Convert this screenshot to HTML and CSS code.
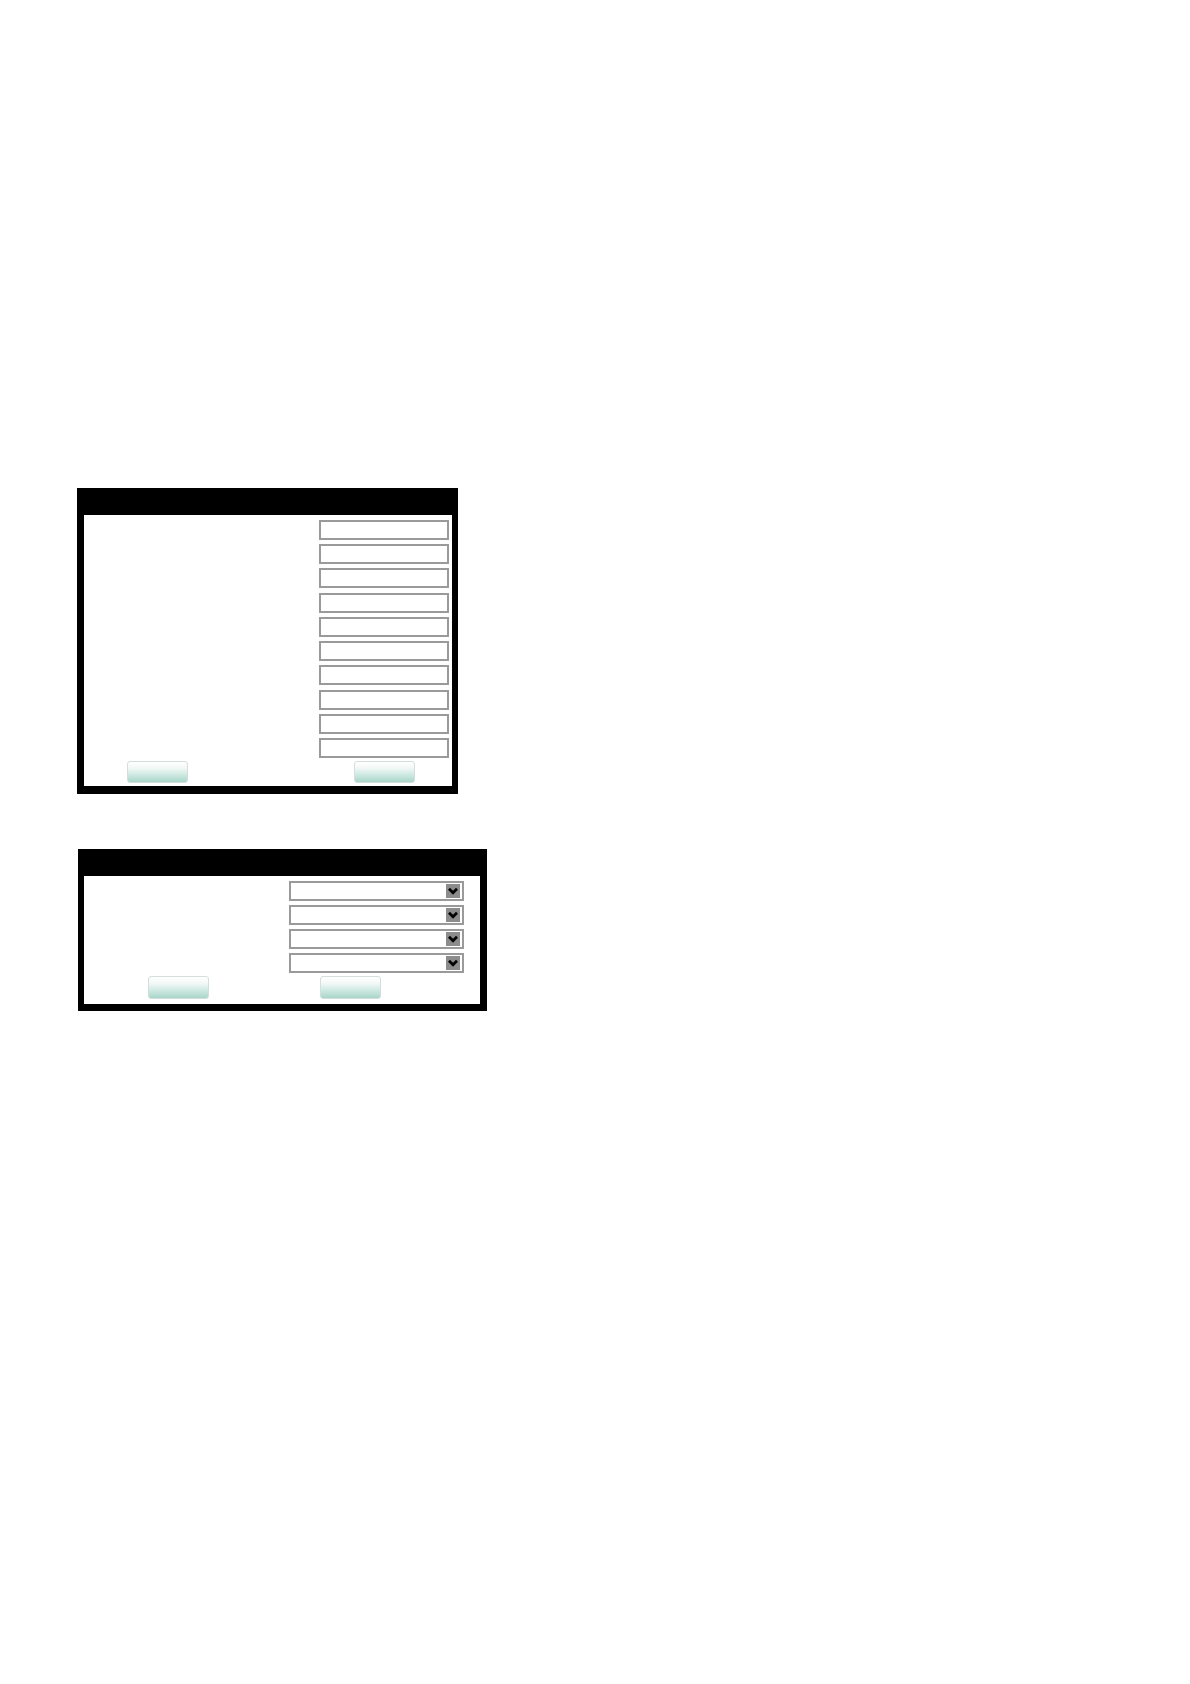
FILE: index.html
```html
<!DOCTYPE html>
<html>
<head>
<meta charset="utf-8">
<link rel="stylesheet" href="styles.css">
</head>
<body>
<div class="page">
  <div class="panel panel-a">
    <div class="panel-head"></div>
    <div class="panel-body">
      <div class="fields fields-a">
        <div class="field"></div>
        <div class="field"></div>
        <div class="field"></div>
        <div class="field"></div>
        <div class="field"></div>
        <div class="field"></div>
        <div class="field"></div>
        <div class="field"></div>
        <div class="field"></div>
        <div class="field"></div>
      </div>
      <div class="buttons buttons-a">
        <div class="btn"></div>
        <div class="btn"></div>
      </div>
    </div>
  </div>

  <div class="panel panel-b">
    <div class="panel-head"></div>
    <div class="panel-body body-b">
      <div class="fields fields-b">
        <div class="field select"><span class="arrow"><svg width="14" height="14" viewBox="0 0 14 14"><path d="M3 4.8 L7 8.8 L11 4.8" fill="none" stroke="#000" stroke-width="2.8"/></svg></span></div>
        <div class="field select"><span class="arrow"><svg width="14" height="14" viewBox="0 0 14 14"><path d="M3 4.8 L7 8.8 L11 4.8" fill="none" stroke="#000" stroke-width="2.8"/></svg></span></div>
        <div class="field select"><span class="arrow"><svg width="14" height="14" viewBox="0 0 14 14"><path d="M3 4.8 L7 8.8 L11 4.8" fill="none" stroke="#000" stroke-width="2.8"/></svg></span></div>
        <div class="field select"><span class="arrow"><svg width="14" height="14" viewBox="0 0 14 14"><path d="M3 4.8 L7 8.8 L11 4.8" fill="none" stroke="#000" stroke-width="2.8"/></svg></span></div>
      </div>
      <div class="buttons buttons-b">
        <div class="btn"></div>
        <div class="btn"></div>
      </div>
    </div>
  </div>
</div>
</body>
</html>
```
FILE: styles.css
```css
html, body {
  margin: 0;
  padding: 0;
  background: #ffffff;
  font-family: "Liberation Sans", Arial, sans-serif;
}
.page {
  display: flex;
  flex-direction: column;
  align-items: flex-start;
  padding-top: 488px;
}
.panel {
  background: #000;
  box-sizing: border-box;
  display: flex;
  flex-direction: column;
}
.panel-a {
  margin-left: 77px;
  width: 381px;
  padding: 0 6px 8px 7px;
}
.panel-b {
  margin-left: 78px;
  margin-top: 55px;
  width: 409px;
  padding: 0 7px 7px 6px;
}
.panel-head {
  height: 27px;
}
.panel-body {
  background: #fff;
  display: flex;
  flex-direction: column;
  padding: 5px 0 3px 0;
}
.body-b {
  padding: 5px 0 5px 0;
}
.fields {
  display: flex;
  flex-direction: column;
  gap: 4px;
}
.fields-a {
  margin-left: 235px;
  width: 130px;
  gap: 4.22px;
}
.fields-b {
  margin-left: 205px;
  width: 175px;
}
.field {
  box-sizing: border-box;
  height: 20px;
  border: 2px solid #9a9a9a;
  background: #fff;
}
.select {
  display: flex;
  align-items: center;
  justify-content: flex-end;
  padding-right: 2px;
}
.arrow {
  display: flex;
  width: 14px;
  height: 14px;
  background: #8c8c8c;
}
.buttons {
  display: flex;
}
.buttons-a {
  margin-top: 3px;
  padding-left: 43px;
  gap: 166px;
}
.buttons-b {
  margin-top: 3px;
  padding-left: 64px;
  gap: 111px;
}
.btn {
  box-sizing: border-box;
  width: 61px;
  height: 22px;
  border: 1px solid #d4dedb;
  border-radius: 3px;
  background: linear-gradient(to bottom, #ffffff 0%, #f2f8f6 30%, #d2ebe4 60%, #a9d6ca 100%);
}
.buttons-b .btn {
  height: 23px;
}
```
